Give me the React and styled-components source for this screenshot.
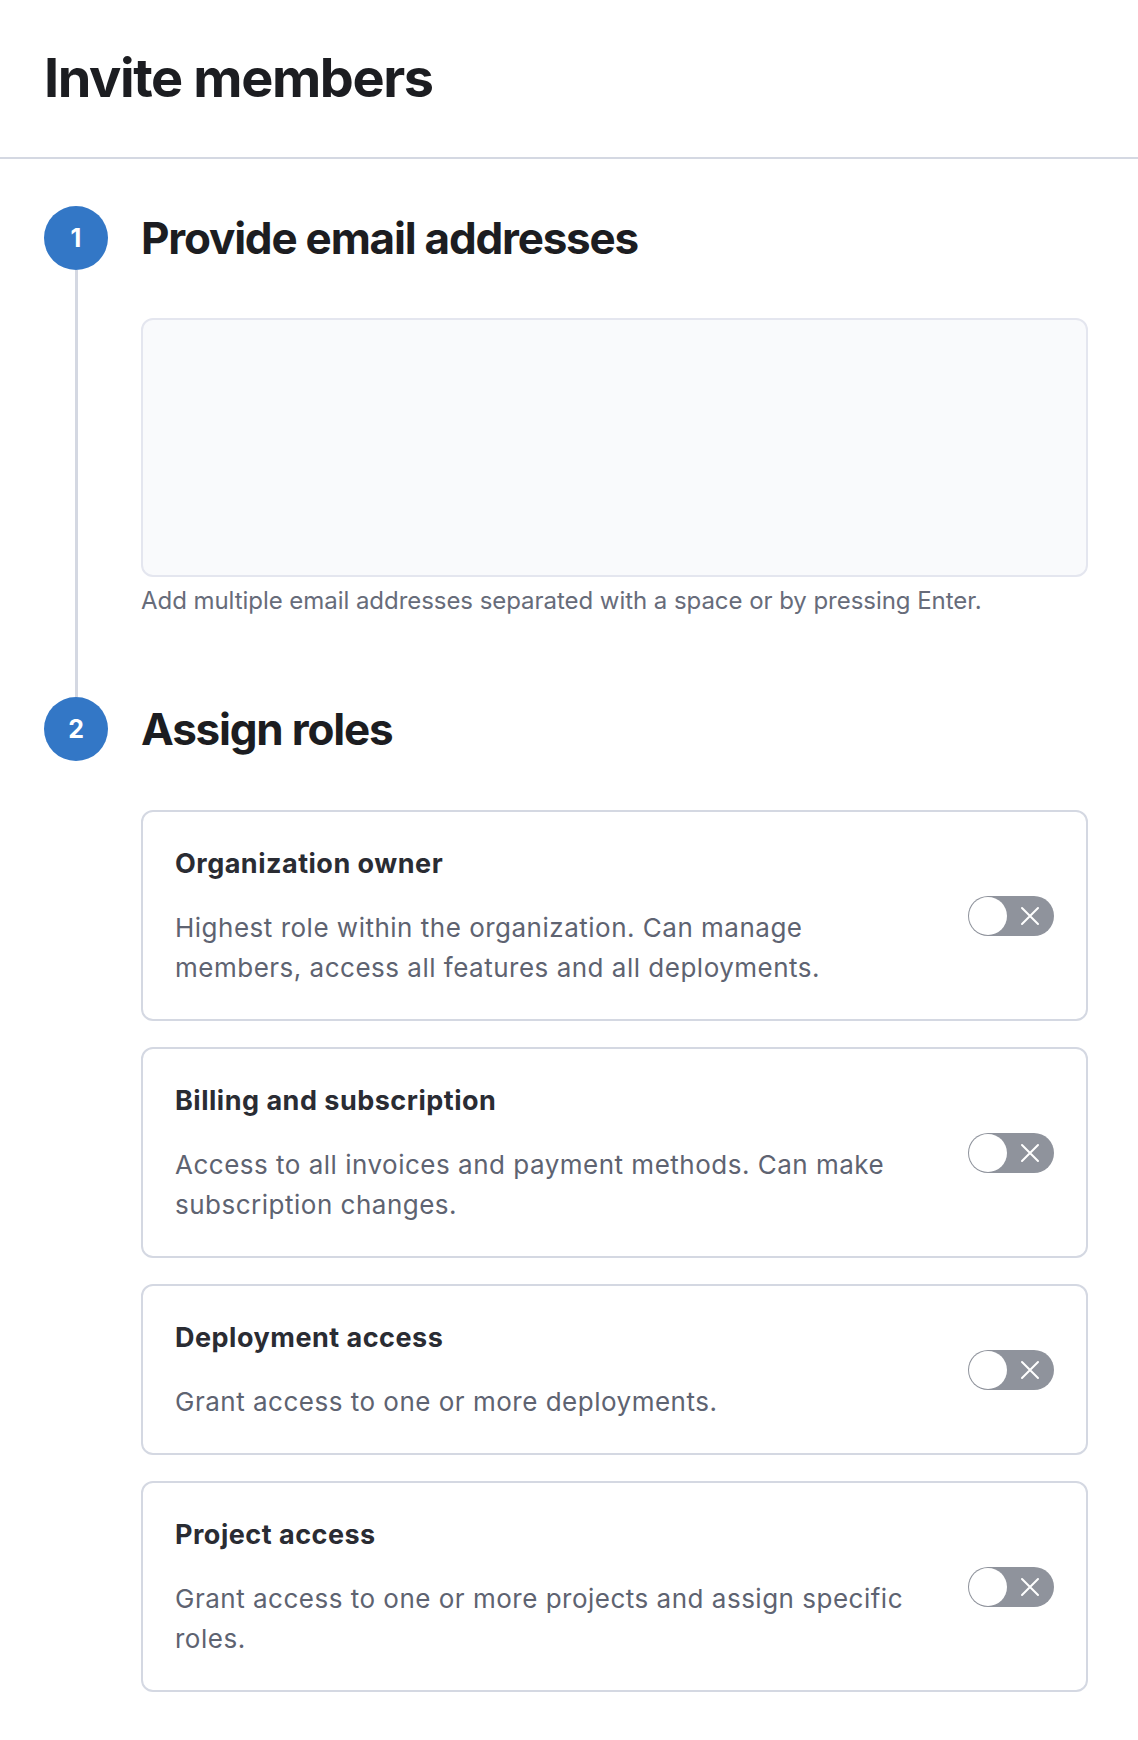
import React from 'react';
import styled, { createGlobalStyle } from 'styled-components';

const GlobalStyle = createGlobalStyle`
  body {
    margin: 0;
    background: #ffffff;
    font-family: Inter, 'Noto Sans', sans-serif;
  }
`;

const blue = '#3377c6';
const rail = '#d4d8e2';

const Page = styled.div`
  width: 1138px;
  display: flex;
  flex-flow: column;
`;

const Header = styled.header`
  padding: 45px 44px 47px;
  border-bottom: 2px solid ${rail};
`;

const Title = styled.h1`
  margin: 0;
  font-size: 54px;
  line-height: 65px;
  font-weight: 700;
  letter-spacing: -1.4px;
  color: #1c1d21;
`;

const Steps = styled.div`
  padding: 47px 50px 0 44px;
  display: flex;
  flex-flow: column;
`;

const Step = styled.section`
  display: grid;
  grid-template-columns: 64px 1fr;
  column-gap: 33px;
`;

const Badge = styled.div`
  width: 64px;
  height: 64px;
  border-radius: 50%;
  background: ${blue};
  color: #ffffff;
  display: flex;
  align-items: center;
  justify-content: center;
  font-size: 25px;
  font-weight: 700;
`;

const StepTitle = styled.h2`
  margin: 0;
  align-self: center;
  font-size: 44px;
  line-height: 52px;
  font-weight: 700;
  letter-spacing: -1.2px;
  color: #1c1d21;
`;

const Rail = styled.div`
  justify-self: center;
  width: 3px;
  background: ${(p) => (p.$last ? 'transparent' : rail)};
`;

const StepBody = styled.div`
  padding: ${(p) => (p.$last ? '49px 0 40px' : '48px 0 80px')};
`;

const EmailBox = styled.textarea`
  display: block;
  box-sizing: border-box;
  width: 100%;
  height: 259px;
  margin: 0;
  padding: 16px 20px;
  border: 2px solid #e4e6ef;
  border-radius: 12px;
  background: #f9fafc;
  resize: none;
  font: inherit;
  font-size: 24px;
  outline: none;
`;

const Hint = styled.p`
  margin: 8px 0 0;
  font-size: 24px;
  line-height: 32px;
  letter-spacing: -0.05px;
  color: #676c7a;
`;

const RoleList = styled.div`
  display: flex;
  flex-flow: column;
  gap: 26px;
`;

const RoleCard = styled.div`
  display: flex;
  align-items: center;
  gap: 48px;
  padding: 32px 32px 31px;
  border: 2px solid ${rail};
  border-radius: 12px;
`;

const RoleText = styled.div`
  flex: 1;
  display: flex;
  flex-flow: column;
  gap: 24px;
`;

const RoleName = styled.div`
  font-size: 27px;
  line-height: 40px;
  font-weight: 700;
  letter-spacing: 0.5px;
  color: #2a2c33;
`;

const RoleDesc = styled.div`
  font-size: 26px;
  line-height: 40px;
  letter-spacing: 0.5px;
  color: #5e6371;
`;

const Toggle = styled.button`
  flex: none;
  box-sizing: border-box;
  width: 86px;
  height: 40px;
  padding: 1px;
  border: none;
  border-radius: 20px;
  background: #8f939c;
  display: flex;
  align-items: center;
  cursor: pointer;
`;

const Knob = styled.span`
  width: 38px;
  height: 38px;
  border-radius: 50%;
  background: #ffffff;
`;

const Cross = styled.svg`
  margin-left: 13px;
`;

const roles = [
  {
    name: 'Organization owner',
    desc: 'Highest role within the organization. Can manage members, access all features and all deployments.',
  },
  {
    name: 'Billing and subscription',
    desc: 'Access to all invoices and payment methods. Can make subscription changes.',
  },
  {
    name: 'Deployment access',
    desc: 'Grant access to one or more deployments.',
  },
  {
    name: 'Project access',
    desc: 'Grant access to one or more projects and assign specific roles.',
  },
];

function Switch() {
  return (
    <Toggle type='button' role='switch' aria-checked='false'>
      <Knob />
      <Cross width='20' height='20' viewBox='0 0 20 20'>
        <path d='M2 2 L18 18 M18 2 L2 18' stroke='#ffffff' strokeWidth='2' strokeLinecap='round' />
      </Cross>
    </Toggle>
  );
}

export default function App() {
  return (
    <Page>
      <GlobalStyle />
      <Header>
        <Title>Invite members</Title>
      </Header>

      <Steps>
        <Step>
          <Badge>1</Badge>
          <StepTitle>Provide email addresses</StepTitle>
          <Rail />
          <StepBody>
            <EmailBox aria-label='Email addresses' />
            <Hint>Add multiple email addresses separated with a space or by pressing Enter.</Hint>
          </StepBody>
        </Step>

        <Step>
          <Badge>2</Badge>
          <StepTitle>Assign roles</StepTitle>
          <Rail $last />
          <StepBody $last>
            <RoleList>
              {roles.map((r) => (
                <RoleCard key={r.name}>
                  <RoleText>
                    <RoleName>{r.name}</RoleName>
                    <RoleDesc>{r.desc}</RoleDesc>
                  </RoleText>
                  <Switch />
                </RoleCard>
              ))}
            </RoleList>
          </StepBody>
        </Step>
      </Steps>
    </Page>
  );
}
